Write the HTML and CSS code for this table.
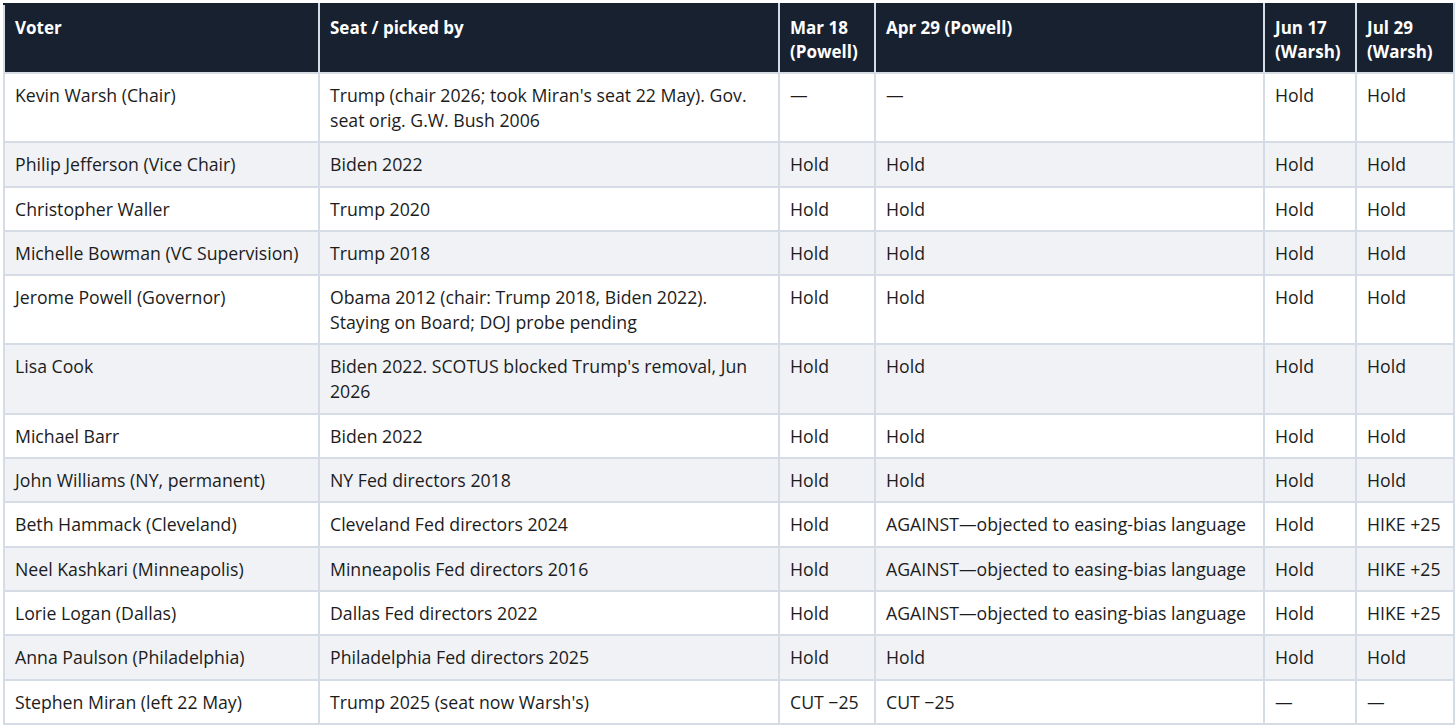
FILE: index.html
```html
<!DOCTYPE html>
<html lang="en">
<head>
<meta charset="utf-8">
<title>FOMC voters</title>
<link rel="stylesheet" href="styles.css">
</head>
<body>
<table class="votes">
  <colgroup>
    <col class="c-voter">
    <col class="c-seat">
    <col class="c-mar">
    <col class="c-apr">
    <col class="c-jun">
    <col class="c-jul">
  </colgroup>
  <thead>
    <tr>
      <th>Voter</th>
      <th>Seat / picked by</th>
      <th>Mar 18 (Powell)</th>
      <th>Apr 29 (Powell)</th>
      <th>Jun 17 (Warsh)</th>
      <th>Jul 29 (Warsh)</th>
    </tr>
  </thead>
  <tbody>
    <tr><td>Kevin Warsh (Chair)</td><td>Trump (chair 2026; took Miran's seat 22 May). Gov. seat orig. G.W. Bush 2006</td><td>—</td><td>—</td><td>Hold</td><td>Hold</td></tr>
    <tr><td>Philip Jefferson (Vice Chair)</td><td>Biden 2022</td><td>Hold</td><td>Hold</td><td>Hold</td><td>Hold</td></tr>
    <tr><td>Christopher Waller</td><td>Trump 2020</td><td>Hold</td><td>Hold</td><td>Hold</td><td>Hold</td></tr>
    <tr><td>Michelle Bowman (VC Supervision)</td><td>Trump 2018</td><td>Hold</td><td>Hold</td><td>Hold</td><td>Hold</td></tr>
    <tr><td>Jerome Powell (Governor)</td><td>Obama 2012 (chair: Trump 2018, Biden 2022). Staying on Board; DOJ probe pending</td><td>Hold</td><td>Hold</td><td>Hold</td><td>Hold</td></tr>
    <tr><td>Lisa Cook</td><td>Biden 2022. SCOTUS blocked Trump's removal, Jun 2026</td><td>Hold</td><td>Hold</td><td>Hold</td><td>Hold</td></tr>
    <tr><td>Michael Barr</td><td>Biden 2022</td><td>Hold</td><td>Hold</td><td>Hold</td><td>Hold</td></tr>
    <tr><td>John Williams (NY, permanent)</td><td>NY Fed directors 2018</td><td>Hold</td><td>Hold</td><td>Hold</td><td>Hold</td></tr>
    <tr><td>Beth Hammack (Cleveland)</td><td>Cleveland Fed directors 2024</td><td>Hold</td><td>AGAINST—objected to easing-bias language</td><td>Hold</td><td>HIKE +25</td></tr>
    <tr><td>Neel Kashkari (Minneapolis)</td><td>Minneapolis Fed directors 2016</td><td>Hold</td><td>AGAINST—objected to easing-bias language</td><td>Hold</td><td>HIKE +25</td></tr>
    <tr><td>Lorie Logan (Dallas)</td><td>Dallas Fed directors 2022</td><td>Hold</td><td>AGAINST—objected to easing-bias language</td><td>Hold</td><td>HIKE +25</td></tr>
    <tr><td>Anna Paulson (Philadelphia)</td><td>Philadelphia Fed directors 2025</td><td>Hold</td><td>Hold</td><td>Hold</td><td>Hold</td></tr>
    <tr><td>Stephen Miran (left 22 May)</td><td>Trump 2025 (seat now Warsh's)</td><td>CUT −25</td><td>CUT −25</td><td>—</td><td>—</td></tr>
  </tbody>
</table>
</body>
</html>
```
FILE: styles.css
```css
html, body {
  margin: 0;
  padding: 0;
  background: #ffffff;
}
body {
  padding: 3px 0 0 3px;
  font-family: "Open Sans", Lato, sans-serif;
  font-size: 17.7px;
  color: #1c1c1c;
}
.votes {
  width: 1450px;
  table-layout: fixed;
  border-collapse: collapse;
  border: 2px solid #d5dce6;
}
.c-voter { width: 315px; }
.c-seat { width: 460px; }
.c-mar { width: 96px; }
.c-apr { width: 389px; }
.c-jun { width: 92px; }
.c-jul { width: 98px; }
.votes th,
.votes td {
  border: 2px solid #d5dce6;
  padding: 9px 10px 8.3px 10px;
  line-height: 25px;
  text-align: left;
  vertical-align: top;
}
.votes th {
  background: #17212f;
  color: #ffffff;
  font-weight: 700;
  font-size: 17px;
  line-height: 24px;
  padding-top: 11px;
  padding-bottom: 8px;
  border-color: #d5dce6;
  border-top-color: #17212f;
}
.votes tbody tr:nth-child(even) td {
  background: #f0f2f6;
}
.votes tbody tr:nth-child(odd) td {
  background: #ffffff;
}
```
